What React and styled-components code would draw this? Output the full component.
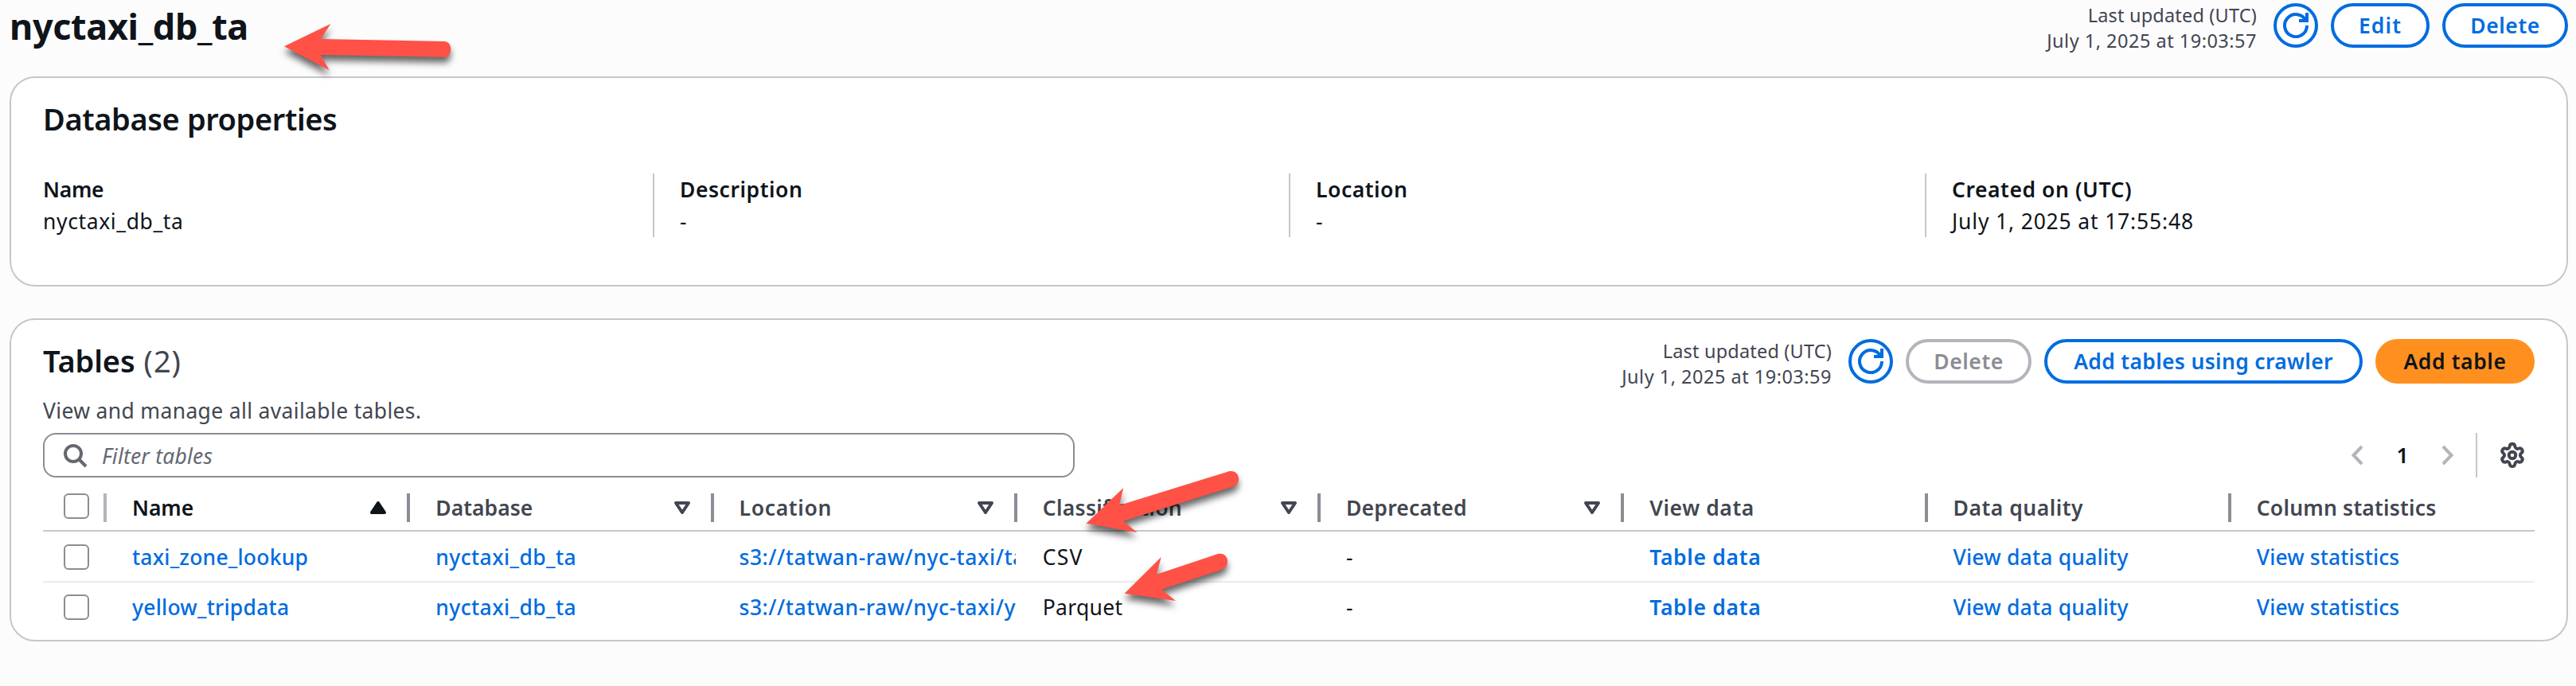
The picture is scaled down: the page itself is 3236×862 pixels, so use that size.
import React from "react";
import styled, { createGlobalStyle, css } from "styled-components";
import { Settings } from "lucide-react";

const color = {
  text: "#0f141a",
  body: "#424650",
  link: "#006ce0",
  border: "#c6c6cd",
  control: "#8c8c94",
  muted: "#b4b4bb",
  row: "#ebebf0",
  orange: "#ff9020",
};

const GlobalStyle = createGlobalStyle`
  * { box-sizing: border-box; }
  body {
    margin: 0;
    background: #fcfcfd;
    color: ${color.text};
    font: 400 26.5px/40px "Noto Sans", "Open Sans", sans-serif;
    overflow: hidden;
  }
  h1, h2, p, dl, dt, dd { margin: 0; }
`;

const Page = styled.main`
  position: relative;
  width: 3236px;
  height: 862px;
  padding: 0 10px 0 12px;
`;

const PageHeader = styled.header`
  display: flex;
  justify-content: space-between;
  align-items: flex-start;
  height: 96px;
`;

const Title = styled.h1`
  padding: 3px 0 0 0;
  font-size: 45px;
  line-height: 60px;
  font-weight: 700;
  letter-spacing: -0.35px;
`;

const Actions = styled.div`
  display: flex;
  gap: 16px;
  padding-top: ${(p) => p.$top || 0}px;
`;

const Updated = styled.div`
  margin: -1px 5px 0 0;
  color: ${color.body};
  font-size: 23.5px;
  line-height: 32px;
  text-align: right;
  white-space: nowrap;
`;

const Track = styled.span`
  letter-spacing: ${(p) => p.$ls}px;
  white-space: pre;
`;

const variants = {
  normal: css`border-color: ${color.link}; color: ${color.link}; background: #fff;`,
  disabled: css`border-color: ${color.muted}; color: ${color.control}; background: #fff;`,
  primary: css`border-color: ${color.orange}; color: ${color.text}; background: ${color.orange};`,
};

const Button = styled.button`
  display: flex;
  align-items: center;
  justify-content: center;
  width: ${(p) => p.$w}px;
  height: 56px;
  padding: 0;
  border: 4px solid;
  border-radius: 40px;
  font: inherit;
  font-weight: 600;
  ${(p) => variants[p.$variant || "normal"]}
`;

const Card = styled.section`
  height: ${(p) => p.$h}px;
  padding: ${(p) => p.$top}px 40px 0;
  border: 2px solid ${color.border};
  border-radius: 32px;
  background: #fff;
  & + & { margin-top: 40px; }
`;

const Heading = styled.h2`
  font-size: 38px;
  line-height: 48px;
  font-weight: 600;
`;

const Counter = styled.span`
  color: ${color.body};
  font-weight: 400;
  letter-spacing: 0.9px;
  margin-left: 11px;
`;

const Properties = styled.dl`
  display: grid;
  grid-template-columns: 766px 799px 799px 1fr;
  margin-top: 45px;
`;

const Property = styled.div`
  height: 80px;
  & + & {
    padding-left: 32px;
    border-left: 2px solid ${color.border};
  }
  dt { font-weight: 600; }
`;

const TableHeader = styled.div`
  display: flex;
  justify-content: space-between;
  align-items: flex-start;
  height: 118px;
`;

const TitleBlock = styled.div`
  padding-top: 3px;
`;

const Description = styled.p`
  margin-top: 19px;
  color: ${color.body};
`;

const Tools = styled.div`
  display: flex;
  justify-content: space-between;
`;

const Filter = styled.div`
  display: flex;
  align-items: center;
  gap: 18px;
  width: 1296px;
  height: 56px;
  padding-left: 22px;
  border: 2px solid ${color.control};
  border-radius: 16px;
  color: #656871;
  font-style: italic;
`;

const Placeholder = styled.span`
  padding-top: 2px;
  letter-spacing: 0.2px;
`;

const Pagination = styled.div`
  display: flex;
  align-items: center;
  height: 56px;
`;

const PageNumber = styled.span`
  width: 98px;
  text-align: center;
  font-weight: 600;
`;

const Preferences = styled.div`
  display: flex;
  align-items: center;
  justify-content: center;
  width: 74px;
  height: 56px;
  margin-left: 27px;
  padding-left: 16px;
  border-left: 2px solid ${color.border};
  color: ${color.body};
`;

const Row = styled.div`
  display: grid;
  grid-template-columns: 80px repeat(8, 1fr);
  height: ${(p) => p.$h}px;
  padding-top: ${(p) => p.$top || 0}px;
  border-bottom: 2px solid ${(p) => p.$line || "transparent"};
`;

const Cell = styled.div`
  display: flex;
  align-items: center;
  min-width: 0;
  margin-right: 2px;
  padding-left: 32px;
  overflow: hidden;
  white-space: nowrap;
`;

const SelectCell = styled(Cell)`
  justify-content: space-between;
  margin-right: 0;
  padding: 0 0 ${(p) => (p.$head ? 4 : 0)}px 26px;
`;

const HeadCell = styled(Cell)`
  justify-content: space-between;
  margin-right: 0;
  color: ${(p) => (p.$active ? color.text : color.body)};
  font-weight: 600;
`;

const HeadEnd = styled.span`
  display: flex;
  align-items: center;
  gap: 20px;
`;

const Divider = styled.span`
  width: 4px;
  height: 36px;
  margin-top: ${(p) => (p.$light ? 4 : 0)}px;
  background: ${(p) => (p.$light ? color.muted : color.control)};
`;

const Checkbox = styled.span`
  width: 32px;
  height: 32px;
  border: 2px solid ${color.control};
  border-radius: 6px;
  background: #fff;
`;

const Link = styled.a`
  color: ${color.link};
  font-weight: ${(p) => (p.$bold ? 600 : 500)};
  letter-spacing: ${(p) => p.$ls}px;
`;

const Arrows = styled.svg`
  position: absolute;
  inset: 0;
  pointer-events: none;
  filter: drop-shadow(0 7px 4px rgba(0, 0, 0, 0.6));
`;

const Refresh = () => (
  <svg width="32" height="32" viewBox="0 0 16 16" fill="none" stroke="currentColor" strokeWidth="2">
    <path d="M10 5h5V0" />
    <path d="M15 8a7 7 0 1 1-.7-3" />
  </svg>
);

const Search = () => (
  <svg width="32" height="32" viewBox="0 0 16 16" fill="none" stroke="currentColor" strokeWidth="2">
    <circle cx="7" cy="7" r="5" />
    <path d="m15 15-4.5-4.5" />
  </svg>
);

const Caret = ({ up }) => (
  <svg width="32" height="32" viewBox="0 0 16 16" stroke="currentColor" strokeWidth="2" strokeLinejoin="round"
    fill={up ? "currentColor" : "none"}>
    <path d={up ? "M4 11h8L8 5z" : "M4 5h8l-4 6z"} />
  </svg>
);

const Chevron = ({ right }) => (
  <svg width="16" height="26" viewBox="0 0 16 26" fill="none" stroke={color.muted} strokeWidth="4">
    <path d={right ? "M2 2l10.5 11L2 24" : "M14 2L3.5 13 14 24"} />
  </svg>
);

const UpdatedAt = ({ time }) => (
  <Updated>
    <Track $ls={0.18}>Last updated (UTC)</Track>
    <br />
    <Track $ls={0.5}>{`July 1, 2025 at ${time}`}</Track>
  </Updated>
);

const properties = [
  ["Name", -0.32, "nyctaxi_db_ta", 0.62],
  ["Description", 0.55, "-", 0],
  ["Location", 0.54, "-", 0],
  ["Created on (UTC)", 0.56, "July 1, 2025 at 17:55:48", 0.83],
];

const columns = [
  { label: "Name", ls: -0.1, sort: "up" },
  { label: "Database", ls: 0.03, sort: "down" },
  { label: "Location", ls: 0.68, sort: "down" },
  { label: "Classification", ls: 0.29, sort: "down" },
  { label: "Deprecated", ls: 0.22, sort: "down" },
  { label: "View data", ls: 0.57 },
  { label: "Data quality", ls: 0.52 },
  { label: "Column statistics", ls: 0.21 },
];

const rows = [
  { name: "taxi_zone_lookup", ls: 0.2, location: "s3://tatwan-raw/nyc-taxi/ta", type: "CSV", typeLs: 1.2 },
  { name: "yellow_tripdata", ls: 0.23, location: "s3://tatwan-raw/nyc-taxi/y", type: "Parquet", typeLs: 0.3 },
];

export default function App() {
  return (
    <Page>
      <GlobalStyle />
      <PageHeader>
        <Title>nyctaxi_db_ta</Title>
        <Actions $top={4}>
          <UpdatedAt time="19:03:57" />
          <Button $w={56} aria-label="Refresh"><Refresh /></Button>
          <Button $w={124}><Track $ls={1.1}>Edit</Track></Button>
          <Button $w={158}><Track $ls={0.57}>Delete</Track></Button>
        </Actions>
      </PageHeader>

      <Card $h={264} $top={27}>
        <Heading><Track $ls={-0.41}>Database properties</Track></Heading>
        <Properties>
          {properties.map(([label, ls, value, vls]) => (
            <Property key={label}>
              <dt><Track $ls={ls}>{label}</Track></dt>
              <dd><Track $ls={vls}>{value}</Track></dd>
            </Property>
          ))}
        </Properties>
      </Card>

      <Card $h={406} $top={24}>
        <TableHeader>
          <TitleBlock>
            <Heading><Track $ls={-0.12}>Tables</Track><Counter>(2)</Counter></Heading>
            <Description><Track $ls={0.34}>View and manage all available tables.</Track></Description>
          </TitleBlock>
          <Actions>
            <UpdatedAt time="19:03:59" />
            <Button $w={56} aria-label="Refresh"><Refresh /></Button>
            <Button $w={158} $variant="disabled"><Track $ls={0.57}>Delete</Track></Button>
            <Button $w={400}><Track $ls={0.33}>Add tables using crawler</Track></Button>
            <Button $w={200} $variant="primary"><Track $ls={0.6}>Add table</Track></Button>
          </Actions>
        </TableHeader>
        <Tools>
          <Filter><Search /><Placeholder>Filter tables</Placeholder></Filter>
          <Pagination>
            <Chevron />
            <PageNumber>1</PageNumber>
            <Chevron right />
            <Preferences><Settings size={34} strokeWidth={2.8} /></Preferences>
          </Pagination>
        </Tools>
        <Row $h={68} $top={10} $line={color.border}>
          <SelectCell $head><Checkbox /><Divider $light /></SelectCell>
          {columns.map(({ label, ls, sort }, i) => (
            <HeadCell key={label} $active={sort === "up"}>
              <Track $ls={ls}>{label}</Track>
              <HeadEnd>
                {sort && <Caret up={sort === "up"} />}
                {i < columns.length - 1 && <Divider />}
              </HeadEnd>
            </HeadCell>
          ))}
        </Row>
        {rows.map((r, i) => (
          <Row key={r.name} $h={i ? 62 : 64} $top={2} $line={i ? undefined : color.row}>
            <SelectCell><Checkbox /></SelectCell>
            <Cell><Link $ls={r.ls}>{r.name}</Link></Cell>
            <Cell><Link $ls={0.4}>nyctaxi_db_ta</Link></Cell>
            <Cell><Link $ls={0.54}>{r.location}</Link></Cell>
            <Cell><Track $ls={r.typeLs}>{r.type}</Track></Cell>
            <Cell>-</Cell>
            <Cell><Link $bold $ls={0.69}>Table data</Link></Cell>
            <Cell><Link $ls={0.2}>View data quality</Link></Cell>
            <Cell><Link $ls={0.1}>View statistics</Link></Cell>
          </Row>
        ))}
      </Card>

      <Arrows width="3236" height="862" viewBox="0 0 3236 862" fill="#ff5145">
        <path d="M357 58.3 415.3 30 403.2 49 559 52Q566 53 566.4 62 565 71.5 559.6 71.7L402.7 69 413.7 88.3Z" />
        <path d="M1364.5 657.7 1411.3 613 1406 635 1544 592.3C1552 591 1556 596 1556 602 1556 607 1553 610 1548 611.7L1410.9 654.7 1428.3 669Z" />
        <path d="M1412.7 745.7 1458.7 700 1452.9 721.7 1530 696C1538 694.5 1542 700 1542 705 1542 711 1539 714 1534.6 715.7L1459 740.7 1477 755Z" />
      </Arrows>
    </Page>
  );
}
